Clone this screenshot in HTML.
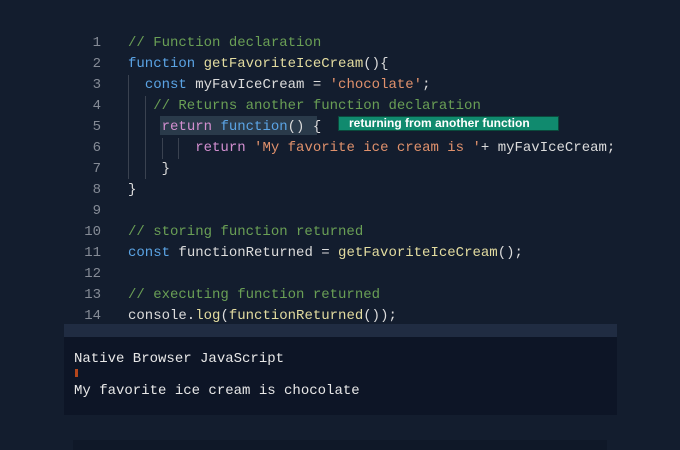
<!DOCTYPE html>
<html><head><style>
html,body{margin:0;padding:0;background:#131d2e;width:680px;height:450px;overflow:hidden;position:relative}
.ln{position:absolute;left:60px;width:41px;text-align:right;font:14px "Liberation Mono",monospace;color:#858b96}
.cd{position:absolute;left:128px;font:14px "Liberation Mono",monospace;color:#dcdcdc;white-space:pre}
.k{color:#5ba4e5}.f{color:#e3dca0}.s{color:#e0916c}.c{color:#6a9f55}.r{color:#d38fd0}
.g{position:absolute;width:1px;background:#3a4250}
</style></head><body>
<div class="g" style="left:128px;top:75px;height:104px"></div>
<div class="g" style="left:145px;top:96px;height:83px"></div>
<div class="g" style="left:162px;top:138px;height:21px"></div>
<div class="g" style="left:178px;top:138px;height:21px"></div>
<div style="position:absolute;left:160px;top:116px;width:157px;height:19px;background:#2a3a4a"></div>
<div style="position:absolute;left:338px;top:116px;width:221px;height:15px;background:#108a6e;border:1px solid #0a4a3c;box-sizing:border-box;color:#fff;font:bold 12px 'Liberation Sans',sans-serif;line-height:13px;padding-left:10px">returning from another function</div>
<div class="ln" style="top:35px">1</div><div class="cd c" style="top:35px">// Function declaration</div>
<div class="ln" style="top:56px">2</div><div class="cd" style="top:56px"><span class="k">function</span> <span class="f">getFavoriteIceCream</span>(){</div>
<div class="ln" style="top:77px">3</div><div class="cd" style="top:77px">  <span class="k">const</span> myFavIceCream = <span class="s">'chocolate'</span>;</div>
<div class="ln" style="top:98px">4</div><div class="cd c" style="top:98px">   // Returns another function declaration</div>
<div class="ln" style="top:119px">5</div><div class="cd" style="top:119px">    <span class="r">return</span> <span class="k">function</span>() {</div>
<div class="ln" style="top:140px">6</div><div class="cd" style="top:140px">        <span class="r">return</span> <span class="s">'My favorite ice cream is '</span>+ myFavIceCream;</div>
<div class="ln" style="top:161px">7</div><div class="cd" style="top:161px">    }</div>
<div class="ln" style="top:182px">8</div><div class="cd" style="top:182px">}</div>
<div class="ln" style="top:203px">9</div>
<div class="ln" style="top:224px">10</div><div class="cd c" style="top:224px">// storing function returned</div>
<div class="ln" style="top:245px">11</div><div class="cd" style="top:245px"><span class="k">const</span> functionReturned = <span class="f">getFavoriteIceCream</span>();</div>
<div class="ln" style="top:266px">12</div>
<div class="ln" style="top:287px">13</div><div class="cd c" style="top:287px">// executing function returned</div>
<div class="ln" style="top:308px">14</div><div class="cd" style="top:308px">console.<span class="f">log</span>(<span class="f">functionReturned</span>());</div>
<div style="position:absolute;left:64px;top:324px;width:553px;height:13px;background:#202c42"></div>
<div style="position:absolute;left:64px;top:337px;width:553px;height:78px;background:#0d1526"></div>
<div style="position:absolute;left:74px;top:351px;font:14px 'Liberation Mono',monospace;color:#e8e8e8">Native Browser JavaScript</div>
<div style="position:absolute;left:75px;top:369px;width:3px;height:8px;background:#b4461c"></div>
<div style="position:absolute;left:74px;top:383px;font:14px 'Liberation Mono',monospace;color:#e8e8e8">My favorite ice cream is chocolate</div>
<div style="position:absolute;left:73px;top:440px;width:534px;height:10px;background:#0f1828"></div>
</body></html>
